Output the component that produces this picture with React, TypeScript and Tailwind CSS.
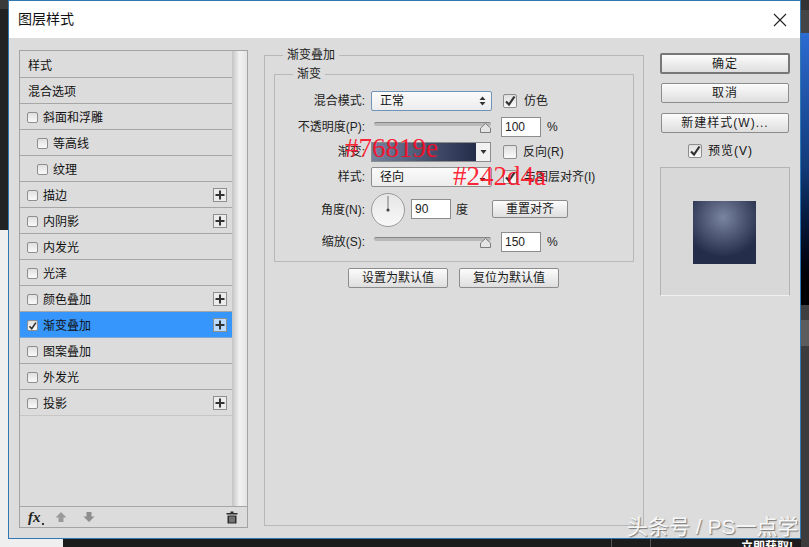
const cjk = `font-['Liberation_Sans','Noto_Sans_CJK_SC',sans-serif]`;

function Plus({ active }: { active?: boolean }) {
  return (
    <span className={`flex h-[14px] w-[14px] items-center justify-center border border-[#8f8f8f] ${active ? "bg-[#bcdcff]" : "bg-[#ececec]"}`}>
      <svg width="10" height="10" viewBox="0 0 10 10"><path d="M4 0.5h2v3.5h3.5v2H6v3.5H4V6H0.5V4H4z" fill="#333" /></svg>
    </span>
  );
}

function Check({ checked, big }: { checked?: boolean; big?: boolean }) {
  const size = big ? "h-[14px] w-[14px]" : "h-[11px] w-[11px]";
  return (
    <span className={`relative flex shrink-0 items-center justify-center rounded-[2px] border border-[#8e8e8e] bg-gradient-to-b from-[#e0e0e0] to-[#fafafa] ${size}`}>
      {checked && (
        <svg width={big ? 12 : 10} height={big ? 12 : 10} viewBox="0 0 12 12">
          <path d="M2 6.5 L5 9.5 L10.5 1.5" fill="none" stroke="#333" strokeWidth="2.2" />
        </svg>
      )}
    </span>
  );
}

const rows: { t: string; indent?: boolean; plus?: boolean; checked?: boolean; active?: boolean }[] = [
  { t: "斜面和浮雕" },
  { t: "等高线", indent: true },
  { t: "纹理", indent: true },
  { t: "描边", plus: true },
  { t: "内阴影", plus: true },
  { t: "内发光" },
  { t: "光泽" },
  { t: "颜色叠加", plus: true },
  { t: "渐变叠加", plus: true, checked: true, active: true },
  { t: "图案叠加" },
  { t: "外发光" },
  { t: "投影", plus: true },
];

function Btn({ children, className = "" }: { children: React.ReactNode; className?: string }) {
  return (
    <div className={`flex items-center justify-center rounded-[2px] border border-[#8c8c8c] bg-gradient-to-b from-[#fcfcfc] to-[#dedede] text-[12px] text-[#1a1a1a] ${className}`}>
      {children}
    </div>
  );
}

function Label({ children }: { children: React.ReactNode }) {
  return <div className="w-[90px] shrink-0 text-right text-[12px] text-[#222]">{children}</div>;
}

function Num({ v, w = "w-[40px]" }: { v: string; w?: string }) {
  return (
    <div className={`flex h-[20px] items-center border border-[#8d8d8d] bg-white pl-[3px] text-[12px] text-[#222] ${w}`}>{v}</div>
  );
}

function Slider() {
  return (
    <div className="relative ml-[3px] mr-[10px] h-[20px] w-[117px]">
      <div className="absolute left-0 right-0 top-[5px] h-[4px] rounded-full border-t border-[#858585] bg-[#b9b9b9]" />
      <svg className="absolute right-0 top-[6px]" width="11" height="10" viewBox="0 0 11 10">
        <path d="M5.5 0.5 L10.5 5 V9.5 H0.5 V5 Z" fill="#e4e4e4" stroke="#7c7c7c" />
      </svg>
    </div>
  );
}

function SelectBox({ text, focus, kind }: { text: string; focus?: boolean; kind: "updown" | "down" }) {
  return (
    <div className={`flex h-[20px] w-[121px] items-center justify-between rounded-[2px] border bg-gradient-to-b from-[#fbfbfb] to-[#ececec] pl-[8px] pr-[5px] text-[12px] text-[#111] ${focus ? "border-[#6f93b8]" : "border-[#8d8d8d]"}`}>
      <span>{text}</span>
      <svg width="7" height="10" viewBox="0 0 7 10">
        {kind === "updown" && <path d="M3.5 0.5 L6.5 4 H0.5Z" fill="#333" />}
        <path d="M3.5 9.5 L6.5 6 H0.5Z" fill="#333" />
      </svg>
    </div>
  );
}

export default function App() {
  return (
    <div className={`relative h-[547px] w-[809px] overflow-hidden bg-[#efefef] ${cjk}`}>
      {/* desktop behind the dialog */}
      <div className="absolute left-0 top-0 h-[230px] w-[8px] bg-[#222]">
        <div className="h-[9px] bg-[#3a3a3a]" />
      </div>
      <div className="absolute bottom-0 left-[63px] right-0 h-[10px] bg-[#1c1c1c]">
        <div className="absolute bottom-0 left-[548px] top-0 w-px bg-[#555]" />
        <div className="absolute bottom-0 left-[587px] top-0 w-px bg-[#555]" />
        <div className="absolute left-[678px] top-[2px] whitespace-nowrap text-[12px] font-bold leading-[16px] text-white">立即获取!</div>
      </div>
      <div className="absolute right-0 top-0 flex h-[547px] w-[8px] flex-col bg-[#3c3c3c]">
        <div className="h-[10px] bg-[#333]" />
        <div className="h-[23px] bg-[#454545]" />
        <div className="h-[272px] bg-gradient-to-b from-[#2c6cd4] via-[#123a78] to-[#000]" />
        <div className="h-[15px] bg-[#3f3f3f]" />
        <div className="h-[26px] bg-[#5c5c5c]" />
      </div>

      {/* dialog */}
      <div className="absolute left-[8px] top-0 flex h-[539px] w-[793px] flex-col border border-[#2f78b4] bg-[#dcdcdc]">
        <div className="flex h-[37px] shrink-0 items-center justify-between bg-white pl-[9px] pr-[13px]">
          <span className="text-[14px] text-[#111]">图层样式</span>
          <svg width="14" height="14" viewBox="0 0 14 14">
            <path d="M1 1 L13 13 M13 1 L1 13" stroke="#222" strokeWidth="1.1" />
          </svg>
        </div>

        <div className="flex flex-1 items-start gap-[16px] pl-[10px] pt-[12px]">
          {/* effects list */}
          <div className="flex h-[478px] w-[229px] shrink-0 flex-col border border-[#a3a3a3]">
            <div className="flex flex-1">
              <div className="w-[212px] text-[12px] text-[#111]">
                <div className="flex h-[27px] items-center border-b border-[#a6a6a6] pl-[8px] pt-[3px]">样式</div>
                <div className="flex h-[26px] items-center border-b border-[#a6a6a6] pl-[8px] pt-[2px]">混合选项</div>
                {rows.map((r) => (
                  <div
                    key={r.t}
                    className={`flex h-[26px] items-center justify-between border-b pr-[5px] ${r.active ? "border-[#7fa9d4] bg-[#3796fb]" : r.t === "投影" ? "border-[#c6c6c6]" : "border-[#a6a6a6]"} ${r.indent ? "pl-[17px]" : "pl-[7px]"}`}
                  >
                    <span className="flex items-center gap-[5px] pt-[2px]">
                      <Check checked={r.checked} />
                      {r.t}
                    </span>
                    {r.plus && <Plus active={r.active} />}
                  </div>
                ))}
              </div>
              <div className="flex-1 bg-gradient-to-r from-[#c4c4c4] via-[#f2f2f2] to-[#e4e4e4]" />
            </div>
            <div className="flex h-[21px] shrink-0 items-center border-t border-[#a6a6a6] bg-[#dcdcdc] pl-[8px] pr-[9px]">
              <span className="relative w-[14px] font-['Liberation_Serif',serif] text-[15px] font-bold italic leading-none text-[#222]">
                fx
                <span className="absolute -right-[2px] bottom-0 h-[2px] w-[2px] bg-[#333]" />
              </span>
              <svg className="ml-[13px]" width="12" height="12" viewBox="0 0 12 12"><path d="M6 1 L11.5 6.5 H8.5 V11 H3.5 V6.5 H0.5Z" fill="#9a9a9a" /></svg>
              <svg className="ml-[16px]" width="12" height="12" viewBox="0 0 12 12"><path d="M6 11 L11.5 5.5 H8.5 V1 H3.5 V5.5 H0.5Z" fill="#8e8e8e" /></svg>
              <svg className="ml-auto" width="12" height="13" viewBox="0 0 12 13">
                <path d="M4.5 0.5h3v1.5h4v1.5H0.5V2h4z M1.5 4.5h9V12.5h-9z" fill="#2c2c2c" />
                <path d="M4 5.5v6 M6 5.5v6 M8 5.5v6" stroke="#dcdcdc" strokeWidth="0.8" />
              </svg>
            </div>
          </div>

          {/* settings */}
          <div className="relative mt-[5px] h-[471px] w-[380px] shrink-0 border border-[#b8b8b8] px-[9px] pt-[18px] text-[12px] text-[#222]">
            <div className="absolute left-[18px] top-[-9px] bg-[#dcdcdc] px-[4px] leading-[16px] text-[#222]">渐变叠加</div>

            <div className="relative flex h-[188px] flex-col gap-[5px] border border-[#b8b8b8] pt-[16px]">
              <div className="absolute left-[18px] top-[-9px] bg-[#dcdcdc] px-[4px] leading-[16px]">渐变</div>

              <div className="flex items-center">
                <Label>混合模式:</Label>
                <div className="ml-[6px]"><SelectBox text="正常" focus kind="updown" /></div>
                <div className="ml-[11px]"><Check checked big /></div>
                <span className="ml-[7px]">仿色</span>
              </div>

              <div className="mt-px flex items-center">
                <Label>不透明度(P):</Label>
                <div className="ml-[6px]"><Slider /></div>
                <Num v="100" />
                <span className="ml-[6px]">%</span>
              </div>

              <div className="flex items-center">
                <Label>渐变:</Label>
                <div className="ml-[6px] flex h-[20px] w-[120px] border border-[#8d8d8d]">
                  <div className="flex-1 bg-gradient-to-r from-[#76819e] to-[#242d4a]" />
                  <div className="flex w-[14px] items-center justify-center bg-[#f2f2f2]">
                    <svg width="7" height="4" viewBox="0 0 7 4"><path d="M0.5 0 H6.5 L3.5 4Z" fill="#333" /></svg>
                  </div>
                </div>
                <div className="ml-[12px]"><Check big /></div>
                <span className="ml-[6px]">反向(R)</span>
              </div>

              <div className="flex items-center">
                <Label>样式:</Label>
                <div className="ml-[6px]"><SelectBox text="径向" kind="down" /></div>
                <div className="ml-[11px]"><Check checked big /></div>
                <span className="ml-[7px]">与图层对齐(I)</span>
              </div>

              <div className="flex h-[35px] items-center">
                <Label>角度(N):</Label>
                <div className="relative ml-[6px] h-[34px] w-[34px] shrink-0 rounded-full border border-[#9a9a9a] bg-gradient-to-b from-[#e6e6e6] to-[#f8f8f8]">
                  <svg className="absolute left-0 top-0" width="32" height="32" viewBox="0 0 32 32">
                    <path d="M16 2 V16" stroke="#777" strokeWidth="1" />
                    <circle cx="16" cy="16" r="1.6" fill="#444" />
                  </svg>
                </div>
                <div className="mb-[1px] ml-[6px]"><Num v="90" /></div>
                <span className="ml-[5px]">度</span>
                <Btn className="mb-[1px] ml-[24px] h-[18px] w-[76px]">重置对齐</Btn>
              </div>

              <div className="flex items-center">
                <Label>缩放(S):</Label>
                <div className="ml-[6px]"><Slider /></div>
                <Num v="150" />
                <span className="ml-[6px]">%</span>
              </div>
            </div>

            <div className="ml-[74px] mt-[6px] flex gap-[11px]">
              <Btn className="h-[20px] w-[100px]">设置为默认值</Btn>
              <Btn className="h-[20px] w-[100px]">复位为默认值</Btn>
            </div>
          </div>

          {/* right column */}
          <div className="mt-[3px] flex w-[130px] shrink-0 flex-col items-center text-[12px] text-[#111]">
            <Btn className="h-[21px] w-[130px] border-2 border-[#777] tracking-[1px]">确定</Btn>
            <Btn className="mt-[9px] h-[20px] w-[128px] tracking-[1px]">取消</Btn>
            <Btn className="mt-[10px] h-[20px] w-[128px] tracking-[1px]">新建样式(W)...</Btn>
            <div className="mt-[9px] flex items-center gap-[6px] self-start pl-[28px] tracking-[1px]">
              <Check checked big />
              <span>预览(V)</span>
            </div>
            <div className="mt-[7px] flex h-[129px] w-[130px] items-center justify-center border border-[#b4b4b4] border-b-[#f0f0f0] bg-[#d8d8d8]">
              <div className="mr-[2px] mt-[2px] h-[63px] w-[63px] bg-[#242d4a] bg-[radial-gradient(circle_at_48%_26%,#7a85a2_0%,#242d4a_70%)]" />
            </div>
          </div>
        </div>
      </div>

      {/* annotations over the screenshot */}
      <div className="absolute left-[345px] top-[134px] font-['Liberation_Serif',serif] text-[27px] leading-[28px] text-[#ff0a20]/90">#76819e</div>
      <div className="absolute left-[453px] top-[162px] font-['Liberation_Serif',serif] text-[27px] leading-[28px] text-[#ff0a20]/90">#242d4a</div>
      <div className="absolute left-[627px] top-[514px] whitespace-nowrap text-[21px] leading-[26px] text-white/90 [text-shadow:1px_1px_1px_#777]">头条号 / PS一点学</div>
    </div>
  );
}
